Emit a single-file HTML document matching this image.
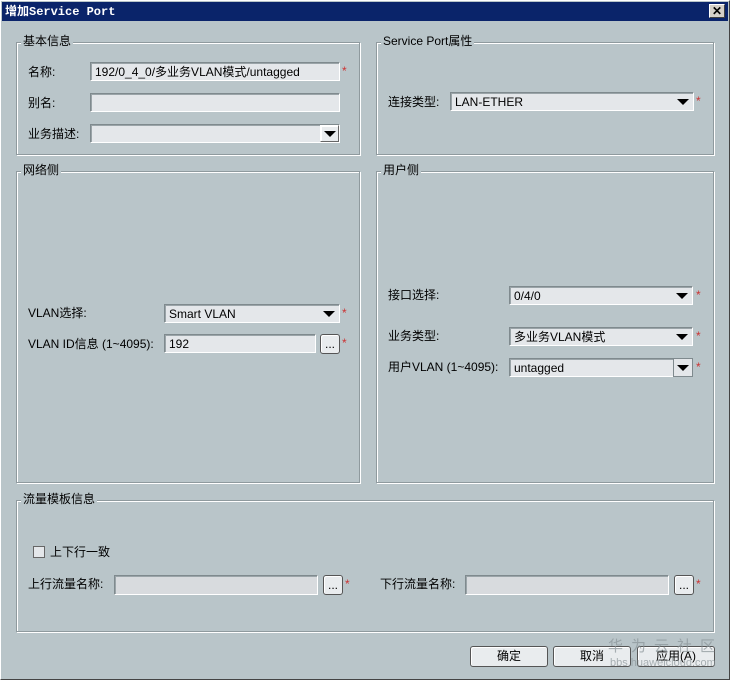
<html><head><style>
body{margin:0;width:730px;height:680px;background:#b9c5c9;font-family:"Liberation Sans","Noto Sans CJK SC",sans-serif;font-size:12px;color:#000;position:relative;overflow:hidden}
div{position:absolute;box-sizing:border-box}
.t{position:absolute;white-space:nowrap;line-height:14px}
.g{border:1px solid #8f9a9e;box-shadow:1px 1px 0 #fff inset,1px 1px 0 #fff}
.gl{position:absolute;top:-9px;left:4px;background:#b9c5c9;padding:0 2px;white-space:nowrap;line-height:14px}
.f{background:#e4e7ea;border:1px solid #7f8a8e;border-right-color:#fff;border-bottom-color:#fff;box-shadow:1px 1px 0 #9aa4a8 inset;padding-left:4px;line-height:19px;white-space:nowrap}
.ar{width:0;height:0;border-left:6px solid transparent;border-right:6px solid transparent;border-top:6px solid #000}
.bt{background:#e9ecee;border:1px solid #555;border-radius:3px;text-align:center;box-shadow:1px 1px 0 #fff inset}
.s{color:#c33;font-size:12px}
</style></head><body>
<div style="left:0;top:0;width:730px;height:680px;border:1px solid #fff;border-right-color:#444;border-bottom-color:#444"></div>
<div style="left:2px;top:2px;width:726px;height:19px;background:#0a246a"></div>
<div class="t" style="left:5px;top:5px;color:#fff;font-weight:bold;font-family:'Liberation Mono','Noto Sans CJK SC',monospace;font-size:12px">增加Service Port</div>
<div style="left:709px;top:4px;width:16px;height:14px;background:#d4d0c8;border:1px solid #fff;border-right-color:#404040;border-bottom-color:#404040;font-size:12px;font-weight:bold;text-align:center;line-height:12px">✕</div>

<div class="g" style="left:16px;top:42px;width:344px;height:113px"><span class="gl">基本信息</span></div>
<div class="t" style="left:28px;top:65px">名称:</div>
<div class="f" style="left:90px;top:62px;width:250px;height:19px">192/0_4_0/多业务VLAN模式/untagged</div><div class="t s" style="left:342px;top:64px">*</div>
<div class="t" style="left:28px;top:96px">别名:</div>
<div class="f" style="left:90px;top:93px;width:250px;height:19px"></div>
<div class="t" style="left:28px;top:127px">业务描述:</div>
<div class="f" style="left:90px;top:124px;width:250px;height:19px"></div>
<div class="bt" style="left:320px;top:125px;width:19px;height:17px;border-radius:0;border-color:#fff #666 #666 #fff"><div class="ar" style="left:3px;top:5px"></div></div>

<div class="g" style="left:376px;top:42px;width:338px;height:113px"><span class="gl">Service Port属性</span></div>
<div class="t" style="left:388px;top:95px">连接类型:</div>
<div class="f" style="left:450px;top:92px;width:244px;height:19px">LAN-ETHER<div class="ar" style="left:226px;top:6px"></div></div><div class="t s" style="left:696px;top:94px">*</div>

<div class="g" style="left:16px;top:171px;width:344px;height:312px"><span class="gl">网络侧</span></div>
<div class="t" style="left:28px;top:306px">VLAN选择:</div>
<div class="f" style="left:164px;top:304px;width:176px;height:19px">Smart VLAN<div class="ar" style="left:158px;top:6px"></div></div><div class="t s" style="left:342px;top:306px">*</div>
<div class="t" style="left:28px;top:337px">VLAN ID信息 (1~4095):</div>
<div class="f" style="left:164px;top:334px;width:152px;height:19px">192</div>
<div class="bt" style="left:320px;top:334px;width:20px;height:20px;line-height:18px">...</div><div class="t s" style="left:342px;top:336px">*</div>

<div class="g" style="left:376px;top:171px;width:338px;height:312px"><span class="gl">用户侧</span></div>
<div class="t" style="left:388px;top:288px">接口选择:</div>
<div class="f" style="left:509px;top:286px;width:184px;height:19px">0/4/0<div class="ar" style="left:166px;top:6px"></div></div><div class="t s" style="left:696px;top:288px">*</div>
<div class="t" style="left:388px;top:329px">业务类型:</div>
<div class="f" style="left:509px;top:327px;width:184px;height:19px">多业务VLAN模式<div class="ar" style="left:166px;top:6px"></div></div><div class="t s" style="left:696px;top:329px">*</div>
<div class="t" style="left:388px;top:360px">用户VLAN (1~4095):</div>
<div class="f" style="left:509px;top:358px;width:184px;height:19px">untagged</div>
<div style="left:673px;top:358px;width:20px;height:19px;border:1px solid #7f8a8e;background:#e4e7ea"><div class="ar" style="left:3px;top:6px"></div></div><div class="t s" style="left:696px;top:360px">*</div>

<div class="g" style="left:16px;top:500px;width:698px;height:132px"><span class="gl">流量模板信息</span></div>
<div style="left:33px;top:546px;width:12px;height:12px;border:1px solid #666;background:#e4e7ea"></div>
<div class="t" style="left:50px;top:545px">上下行一致</div>
<div class="t" style="left:28px;top:577px">上行流量名称:</div>
<div class="f" style="left:114px;top:575px;width:204px;height:20px;background:#d8dbde"></div>
<div class="bt" style="left:323px;top:575px;width:20px;height:20px;line-height:18px">...</div><div class="t s" style="left:345px;top:577px">*</div>
<div class="t" style="left:380px;top:577px">下行流量名称:</div>
<div class="f" style="left:465px;top:575px;width:204px;height:20px;background:#d8dbde"></div>
<div class="bt" style="left:674px;top:575px;width:20px;height:20px;line-height:18px">...</div><div class="t s" style="left:696px;top:577px">*</div>

<div class="bt" style="left:470px;top:646px;width:78px;height:21px;line-height:19px">确定</div>
<div class="bt" style="left:553px;top:646px;width:78px;height:21px;line-height:19px">取消</div>
<div class="bt" style="left:637px;top:646px;width:78px;height:21px;line-height:19px">应用(A)</div>
<div class="t" style="left:608px;top:638px;color:#8a9498;font-size:15px;letter-spacing:8px;opacity:.7;line-height:18px">华为云社区</div>
<div class="t" style="left:610px;top:656px;color:#8a9498;font-size:11px;opacity:.7">bbs.huaweicloud.com</div>
</body></html>
